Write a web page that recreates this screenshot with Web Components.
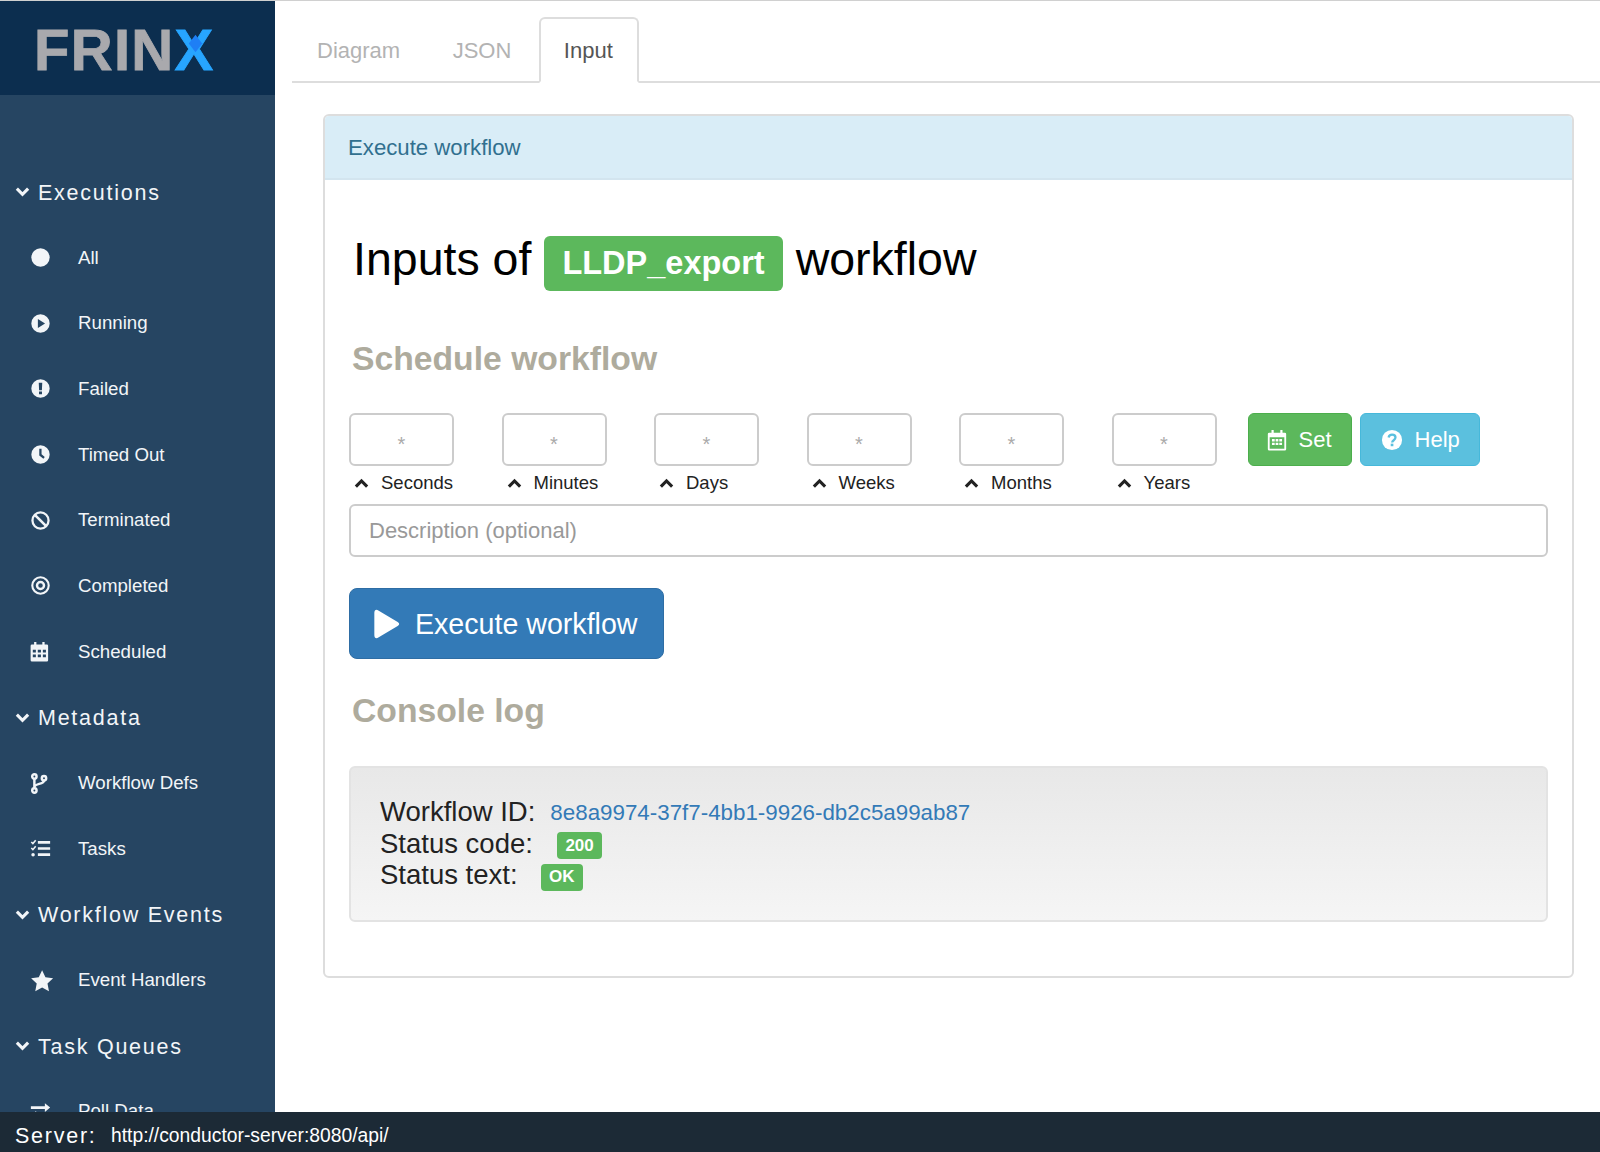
<!DOCTYPE html>
<html>
<head>
<meta charset="utf-8">
<title>FRINX</title>
<style>
    body {
        margin: 0;
        font-family: "Liberation Sans", Arial, sans-serif;
    }
</style>
</head>
<body>
<frinx-app>
    <side-bar slot="side">
        <side-group>Executions</side-group>
        <side-item icon="circle">All</side-item>
        <side-item icon="play-circle">Running</side-item>
        <side-item icon="exclamation-circle">Failed</side-item>
        <side-item icon="clock">Timed Out</side-item>
        <side-item icon="ban">Terminated</side-item>
        <side-item icon="dot-circle">Completed</side-item>
        <side-item icon="calendar">Scheduled</side-item>
        <side-group>Metadata</side-group>
        <side-item icon="code-fork">Workflow Defs</side-item>
        <side-item icon="tasks">Tasks</side-item>
        <side-group>Workflow Events</side-group>
        <side-item icon="star">Event Handlers</side-item>
        <side-group>Task Queues</side-group>
        <side-item icon="exchange">Poll Data</side-item>
    </side-bar>

    <tab-bar slot="main">
        <tab-link>Diagram</tab-link>
        <tab-link>JSON</tab-link>
        <tab-link active>Input</tab-link>
    </tab-bar>

    <panel-card slot="main" title="Execute workflow">
        <workflow-title name="LLDP_export"></workflow-title>
        <section-title>Schedule workflow</section-title>
        <cron-row>
            <cron-field label="Seconds"></cron-field>
            <cron-field label="Minutes"></cron-field>
            <cron-field label="Days"></cron-field>
            <cron-field label="Weeks"></cron-field>
            <cron-field label="Months"></cron-field>
            <cron-field label="Years"></cron-field>
            <action-button slot="actions" icon="calendar-o" kind="success">Set</action-button>
            <action-button slot="actions" icon="question-circle" kind="info">Help</action-button>
        </cron-row>
        <text-field placeholder="Description (optional)"></text-field>
        <execute-button>Execute workflow</execute-button>
        <section-title console>Console log</section-title>
        <console-log>
            <log-line label="Workflow ID:" gap="15"><a-id>8e8a9974-37f7-4bb1-9926-db2c5a99ab87</a-id></log-line>
            <log-line label="Status code:" gap="24"><status-badge>200</status-badge></log-line>
            <log-line label="Status text:" gap="23"><status-badge>OK</status-badge></log-line>
        </console-log>
    </panel-card>

    <server-bar slot="foot" url="http://conductor-server:8080/api/"></server-bar>
</frinx-app>

<script>
const ICONS = {
    "circle": `<circle cx="12" cy="12" r="10.5"/>`,
    "play-circle": `<path fill-rule="evenodd" d="M12 1.5a10.5 10.5 0 1 0 0 21a10.5 10.5 0 1 0 0-21zM9 6.8l8.2 5.2L9 17.2z"/>`,
    "exclamation-circle": `<path fill-rule="evenodd" d="M12 1.5a10.5 10.5 0 1 0 0 21a10.5 10.5 0 1 0 0-21zM10 5.5h4l-.4 8.5h-3.2zM10.3 15.5h3.4v3.2h-3.4z"/>`,
    "clock": `<path fill-rule="evenodd" d="M12 1.5a10.5 10.5 0 1 0 0 21a10.5 10.5 0 1 0 0-21zM10.6 5.5h2.6v6.3l3.7 3-1.6 2-4.7-3.8z"/>`,
    "ban": `<circle cx="12" cy="12" r="9.200" fill="none" stroke="currentColor" stroke-width="2.600"/><path d="M5.800 5.800l12.400 12.400" fill="none" stroke="currentColor" stroke-width="3"/>`,
    "dot-circle": `<circle cx="12" cy="12" r="9.400" fill="none" stroke="currentColor" stroke-width="2.400"/><circle cx="12" cy="12" r="4" fill="none" stroke="currentColor" stroke-width="2.800"/>`,
    "calendar": `<path transform="translate(-1.300 0)" fill-rule="evenodd" d="M6 1h2.600v3h6.800V1H18v3h2.500A1.500 1.500 0 0 1 22 5.500V22a1.500 1.500 0 0 1-1.500 1.500h-17A1.500 1.500 0 0 1 2 22V5.500A1.500 1.500 0 0 1 3.500 4H6zM4.500 10v3h3.500v-3zM10.200 10v3h3.600v-3zM16 10v3h3.500v-3zM4.500 15.500v3h3.500v-3zM10.200 15.500v3h3.600v-3zM16 15.500v3h3.500v-3z"/>`,
    "calendar-o": `<path fill-rule="evenodd" d="M6 1h2.400v3h7.200V1H18v3h2.500A1.500 1.500 0 0 1 22 5.500V22a1.500 1.500 0 0 1-1.500 1.500h-17A1.500 1.500 0 0 1 2 22V5.500A1.500 1.500 0 0 1 3.500 4H6zM4 9v12.500h16V9z"/><path d="M6.500 11h3v2.500h-3zM10.500 11h3v2.500h-3zM14.500 11h3v2.500h-3zM6.500 15h3v2.500h-3zM10.500 15h3v2.500h-3zM14.500 15h3v2.500h-3z"/>`,
    "code-fork": `<g fill="none" stroke="currentColor" stroke-width="2.800"><circle cx="5" cy="4" r="2.500"/><circle cx="5" cy="20" r="2.500"/><circle cx="16" cy="6" r="2.500"/><path d="M5 6.500v11M16 8.500c0 5-11 3-11 8"/></g>`,
    "tasks": `<path d="M9 3.500h14v3H9zM9 10.500h14v3H9zM9 17.500h14v3H9z"/><path d="M1.500 4.500l1.800 1.800L6.500 2.500M1.500 11.500l1.800 1.800 3.200-3.800" fill="none" stroke="currentColor" stroke-width="1.800"/><circle cx="3.500" cy="19" r="2"/>`,
    "star": `<path transform="translate(.400 -.800) scale(1.120)" d="M12 1l3.400 7.200 7.800 1-5.700 5.400 1.500 7.800-7-3.800-7 3.800 1.500-7.800L.8 9.200l7.800-1z"/>`,
    "exchange": `<path d="M1 6h16V2.500L23 7.500l-6 5V9H1zM23 15H7v-3.500L1 16.500l6 5V18h16z"/>`,
    "chevron-down": `<path d="M3 7.500l9 9 9-9" fill="none" stroke="currentColor" stroke-width="5"/>`,
    "chevron-up": `<path d="M3 17l9-9 9 9" fill="none" stroke="currentColor" stroke-width="5"/>`,
    "question-circle": `<circle cx="12" cy="12" r="11"/><path d="M8.300 9.300c.4-2 1.800-3.100 3.800-3.100 2.100 0 3.700 1.300 3.700 3.200 0 2.800-3.600 2.800-3.600 5.200" fill="none" stroke="var(--hole,#5bc0de)" stroke-width="2.500"/><path d="M10.600 16h2.900v2.800h-2.900z" fill="var(--hole,#5bc0de)"/>`,
    "play": `<path d="M4 3.500c0-2 1.400-2.700 3-1.700l14.500 8.700c1.500.9 1.500 2.100 0 3L7 22.200c-1.600 1-3 .3-3-1.700z"/>`
};

class FrinxElement extends HTMLElement {
    constructor() {
        super();
        this._shadowRoot = this.attachShadow({mode: "open"});
    }

    connectedCallback() {
        this.render();
    }
}

class FaIcon extends FrinxElement {
    render() {
        const size = this.getAttribute("size") || 20;
        this._shadowRoot.innerHTML = `
            <style>
            :host { display: inline-flex; width: ${size}px; height: ${size}px; }
            svg { width: 100%; height: 100%; fill: currentColor; display: block; overflow: visible; }
            </style>
            <svg viewBox="0 0 24 24">${ICONS[this.getAttribute("name")] || ""}</svg>
        `;
    }
}

class FrinxApp extends FrinxElement {
    render() {
        this._shadowRoot.innerHTML = `
            <style>
            :host {
                display: grid;
                grid-template-columns: 275px 1fr;
                grid-template-rows: 1fr 40px;
                height: 1152px;
                overflow: hidden;
                box-sizing: border-box;
                border-top: 1px solid #d0d0d0;
            }
            .side { grid-column: 1; grid-row: 1; min-height: 0; overflow: hidden; padding-right: 6px; position: relative; z-index: 1; }
            .main { grid-column: 2; grid-row: 1; min-width: 0; }
            .foot { grid-column: 1 / 3; grid-row: 2; position: relative; z-index: 2; }
            </style>
            <div class="side"><slot name="side"></slot></div>
            <div class="main"><slot name="main"></slot></div>
            <div class="foot"><slot name="foot"></slot></div>
        `;
    }
}

class SideBar extends FrinxElement {
    render() {
        this._shadowRoot.innerHTML = `
            <style>
            :host {
                display: block;
                width: 275px;
                min-height: 1111px;
                background: #264562;
                color: #f2f5f8;
                box-shadow: 1px 0 0 #5e83a6, 3px 0 5px rgba(90, 130, 170, .35);
            }
            .logo {
                height: 94px;
                background: #0c2e4f;
                padding: 4px 0 0 34px;
                box-sizing: border-box;
                display: flex;
                align-items: center;
                font: bold 58px/1 "Liberation Sans", sans-serif;
                color: #a9a9ad;
                letter-spacing: 1.3px;
                -webkit-text-stroke: .8px currentColor;
            }
            .x { color: #27a5ff; position: relative; }
            .x i {
                position: absolute;
                left: 15px;
                top: 21px;
                width: 11px;
                height: 11px;
                background: #1e7ff5;
                transform: rotate(45deg) skew(8deg, 8deg);
            }
            .rows { padding-top: 64px; }
            </style>
            <div class="logo"><span>FRIN<span class="x">X<i></i></span></span></div>
            <div class="rows"><slot></slot></div>
        `;
    }
}

class SideGroup extends FrinxElement {
    render() {
        this._shadowRoot.innerHTML = `
            <style>
            :host {
                display: flex;
                align-items: center;
                height: 65.7px;
                padding-left: 15px;
                gap: 8px;
                font-size: 21.5px;
                letter-spacing: 1.75px;
                box-sizing: border-box;
            }
            span { padding-top: 3px; }
            </style>
            <fa-icon name="chevron-down" size="15"></fa-icon>
            <span><slot></slot></span>
        `;
    }
}

class SideItem extends FrinxElement {
    render() {
        this._shadowRoot.innerHTML = `
            <style>
            :host {
                display: flex;
                align-items: center;
                height: 65.7px;
                padding-left: 30px;
                font-size: 18.7px;
                box-sizing: border-box;
            }
            .icon { width: 48px; display: flex; }
            </style>
            <span class="icon"><fa-icon name="${this.getAttribute("icon")}" size="21"></fa-icon></span>
            <slot></slot>
        `;
    }
}

class TabBar extends FrinxElement {
    render() {
        this._shadowRoot.innerHTML = `
            <style>
            :host {
                display: flex;
                margin: 16px 0 0 17px;
                height: 66px;
                box-sizing: border-box;
                border-bottom: 2px solid #ddd;
            }
            </style>
            <slot></slot>
        `;
    }
}

class TabLink extends FrinxElement {
    render() {
        const active = this.hasAttribute("active");
        this._shadowRoot.innerHTML = `
            <style>
            :host {
                display: flex;
                align-items: center;
                height: 66px;
                box-sizing: border-box;
                padding: 2px 25px 0;
                margin-right: 2.5px;
                font-size: 22px;
                color: ${active ? "#555" : "#b3b3b3"};
                ${active ? "background: #fff; border: 2px solid #ddd; border-bottom-color: #fff; border-radius: 6px 6px 0 0; padding: 2px 24px 0 23px;" : ""}
            }
            </style>
            <slot></slot>
        `;
    }
}

class PanelCard extends FrinxElement {
    render() {
        this._shadowRoot.innerHTML = `
            <style>
            :host {
                display: block;
                margin: 31px 26px 0 48px;
                border: 2px solid #ddd;
                border-radius: 6px;
                height: 864px;
                box-sizing: border-box;
                overflow: hidden;
            }
            header {
                height: 64px;
                box-sizing: border-box;
                background: #d9edf7;
                border-bottom: 2px solid #d3e5ef;
                color: #31708f;
                font-size: 22.2px;
                padding: 2px 0 0 23px;
                display: flex;
                align-items: center;
            }
            .body { padding: 51px 24px 0 24px; }
            </style>
            <header>${this.getAttribute("title")}</header>
            <div class="body"><slot></slot></div>
        `;
    }
}

class WorkflowTitle extends FrinxElement {
    render() {
        this._shadowRoot.innerHTML = `
            <style>
            :host {
                display: flex;
                align-items: center;
                height: 56px;
                padding-left: 4px;
                font-size: 46.5px;
                color: #000;
            }
            .badge {
                margin: 0 13px 0 13px;
                height: 55px;
                padding: 0 18px;
                border-radius: 6px;
                background: #5cb85c;
                color: #fff;
                font-weight: bold;
                font-size: 32.5px;
                display: flex;
                align-items: center;
                box-sizing: border-box;
                position: relative;
                top: 4px;
            }
            </style>
            <span>Inputs of</span>
            <span class="badge">${this.getAttribute("name")}</span>
            <span>workflow</span>
        `;
    }
}

class SectionTitle extends FrinxElement {
    render() {
        const consoleTitle = this.hasAttribute("console");
        this._shadowRoot.innerHTML = `
            <style>
            :host {
                display: block;
                height: 40px;
                line-height: 40px;
                margin: ${consoleTitle ? "31px 0 36px 3px" : "51px 0 35px 3px"};
                font-size: 33.7px;
                font-weight: bold;
                color: #aeab9d;
            }
            </style>
            <slot></slot>
        `;
    }
}

class CronRow extends FrinxElement {
    render() {
        // action buttons carry slot="actions", everything else is a field
        this._shadowRoot.innerHTML = `
            <style>
            :host { display: flex; align-items: flex-start; }
            .fields { display: flex; gap: 47.5px; }
            .actions { display: flex; gap: 8px; margin-left: 31px; }
            </style>
            <div class="fields"><slot></slot></div>
            <div class="actions"><slot name="actions"></slot></div>
        `;
    }
}

class CronField extends FrinxElement {
    render() {
        this._shadowRoot.innerHTML = `
            <style>
            :host { display: block; width: 105px; }
            input {
                display: block;
                width: 100%;
                height: 53px;
                box-sizing: border-box;
                border: 2px solid #ccc;
                border-radius: 6px;
                background: #fff;
                text-align: center;
                font: 20px "Liberation Sans", sans-serif;
                padding: 10px 0 0;
                outline: none;
            }
            input::placeholder { color: #aaa; opacity: 1; }
            label {
                display: flex;
                align-items: center;
                height: 26px;
                margin-top: 4px;
                padding-left: 5px;
                gap: 12px;
                font-size: 18.5px;
                color: #222;
                white-space: nowrap;
            }
            </style>
            <input placeholder="*" value="">
            <label><fa-icon name="chevron-up" size="15"></fa-icon>${this.getAttribute("label")}</label>
        `;
    }
}

class ActionButton extends FrinxElement {
    render() {
        const success = this.getAttribute("kind") === "success";
        this._shadowRoot.innerHTML = `
            <style>
            :host {
                display: flex;
                align-items: center;
                height: 53px;
                box-sizing: border-box;
                padding: ${success ? "0 19px 0 17px" : "0 19px 0 20px"};
                gap: ${success ? "11px" : "12px"};
                border: 1px solid ${success ? "#4cae4c" : "#46b8da"};
                border-radius: 6px;
                background: ${success ? "#5cb85c" : "#5bc0de"};
                --hole: ${success ? "#5cb85c" : "#5bc0de"};
                color: #fff;
                font-size: 22px;
            }
            </style>
            <fa-icon name="${this.getAttribute("icon")}" size="22"></fa-icon>
            <slot></slot>
        `;
    }
}

class TextField extends FrinxElement {
    render() {
        this._shadowRoot.innerHTML = `
            <style>
            :host { display: block; margin-top: 8px; }
            input {
                display: block;
                width: 100%;
                height: 53px;
                box-sizing: border-box;
                border: 2px solid #ccc;
                border-radius: 6px;
                padding: 0 18px;
                font: 22px "Liberation Sans", sans-serif;
                color: #555;
                outline: none;
            }
            input::placeholder { color: #999; opacity: 1; }
            </style>
            <input placeholder="${this.getAttribute("placeholder")}">
        `;
    }
}

class ExecuteButton extends FrinxElement {
    render() {
        this._shadowRoot.innerHTML = `
            <style>
            :host {
                display: flex;
                align-items: center;
                width: 315px;
                height: 71px;
                margin-top: 31px;
                box-sizing: border-box;
                padding: 1px 0 0 19px;
                gap: 14px;
                background: #337ab7;
                border: 1px solid #2e6da4;
                border-radius: 8px;
                color: #fff;
                font-size: 28.6px;
            }
            </style>
            <fa-icon name="play" size="32"></fa-icon>
            <slot></slot>
        `;
    }
}

class ConsoleLog extends FrinxElement {
    render() {
        this._shadowRoot.innerHTML = `
            <style>
            :host {
                display: block;
                height: 156px;
                box-sizing: border-box;
                padding: 28px 29px;
                border: 2px solid #e3e3e3;
                border-radius: 6px;
                background: linear-gradient(#e8e8e8, #f5f5f5);
            }
            </style>
            <slot></slot>
        `;
    }
}

class LogLine extends FrinxElement {
    render() {
        this._shadowRoot.innerHTML = `
            <style>
            :host {
                display: flex;
                align-items: center;
                height: 31.7px;
                font-size: 27.5px;
                color: #222;
                gap: ${this.getAttribute("gap")}px;
            }
            </style>
            <span>${this.getAttribute("label")}</span>
            <slot></slot>
        `;
    }
}

class AId extends FrinxElement {
    render() {
        this._shadowRoot.innerHTML = `
            <style>
            :host { display: inline-block; font-size: 22.35px; color: #337ab7; position: relative; top: 1px; }
            </style>
            <slot></slot>
        `;
    }
}

class StatusBadge extends FrinxElement {
    render() {
        this._shadowRoot.innerHTML = `
            <style>
            :host {
                display: inline-flex;
                align-items: center;
                height: 27px;
                padding: 0 8.5px;
                border-radius: 4px;
                background: #5cb85c;
                color: #fff;
                font-size: 17px;
                font-weight: bold;
                position: relative;
                top: 2px;
            }
            </style>
            <slot></slot>
        `;
    }
}

class ServerBar extends FrinxElement {
    render() {
        this._shadowRoot.innerHTML = `
            <style>
            :host {
                display: flex;
                align-items: center;
                height: 40px;
                background: #1c2a36;
                color: #fff;
                padding: 8px 0 0 15px;
                box-sizing: border-box;
            }
            .label { font-size: 21.5px; letter-spacing: 1.75px; width: 96px; }
            .url { font-size: 19.3px; }
            </style>
            <span class="label">Server:</span>
            <span class="url">${this.getAttribute("url")}</span>
        `;
    }
}

customElements.define("fa-icon", FaIcon);
customElements.define("frinx-app", FrinxApp);
customElements.define("side-bar", SideBar);
customElements.define("side-group", SideGroup);
customElements.define("side-item", SideItem);
customElements.define("tab-bar", TabBar);
customElements.define("tab-link", TabLink);
customElements.define("panel-card", PanelCard);
customElements.define("workflow-title", WorkflowTitle);
customElements.define("section-title", SectionTitle);
customElements.define("cron-row", CronRow);
customElements.define("cron-field", CronField);
customElements.define("action-button", ActionButton);
customElements.define("text-field", TextField);
customElements.define("execute-button", ExecuteButton);
customElements.define("console-log", ConsoleLog);
customElements.define("log-line", LogLine);
customElements.define("a-id", AId);
customElements.define("status-badge", StatusBadge);
customElements.define("server-bar", ServerBar);
</script>
</body>
</html>
